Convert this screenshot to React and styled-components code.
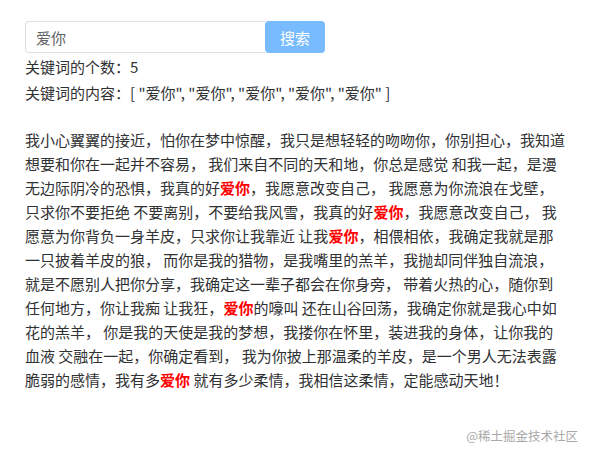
import { Fragment } from "react";
import styled, { createGlobalStyle } from "styled-components";

const GlobalStyle = createGlobalStyle`
  body {
    margin: 0;
    background: #fff;
    font-family: "Microsoft YaHei", "Noto Sans CJK SC", "Noto Sans", sans-serif;
    color: #303133;
  }
`;

const Page = styled.div`
  position: relative;
  width: 593px;
  height: 459px;
  padding: 21px 25px 0;
  box-sizing: border-box;
`;

const SearchBar = styled.div`
  display: flex;
  width: 300px;
  height: 32px;
`;

const SearchInput = styled.input`
  width: 240px;
  height: 32px;
  box-sizing: border-box;
  border: 1px solid #dcdfe6;
  border-right: none;
  border-radius: 4px 0 0 4px;
  padding: 0 10px;
  font: inherit;
  font-size: 15px;
  color: #606266;
  outline: none;
`;

const SearchButton = styled.button`
  width: 60px;
  height: 32px;
  border: none;
  border-radius: 4px;
  background: #79bbff;
  color: #fff;
  font: inherit;
  font-size: 15px;
  cursor: pointer;
`;

const Info = styled.div`
  font-size: 15px;
  line-height: 24px;
  margin-top: 2px;
`;

const Article = styled.p`
  width: 541px;
  margin: 23px 0 0;
  font-size: 15px;
  line-height: 24px;
  word-break: break-all;
`;

const Mark = styled.span`
  color: #f00;
  font-weight: bold;
`;

const Watermark = styled.div`
  position: absolute;
  right: 15px;
  bottom: 14px;
  font-size: 12.5px;
  color: #9a9a9a;
  opacity: 0.85;
`;

const keyword = "爱你";
const text =
  "我小心翼翼的接近，怕你在梦中惊醒，我只是想轻轻的吻吻你，你别担心，我知道想要和你在一起并不容易， 我们来自不同的天和地，你总是感觉 和我一起，是漫无边际阴冷的恐惧，我真的好爱你，我愿意改变自己， 我愿意为你流浪在戈壁，只求你不要拒绝 不要离别，不要给我风雪，我真的好爱你，我愿意改变自己， 我愿意为你背负一身羊皮，只求你让我靠近 让我爱你，相偎相依，我确定我就是那一只披着羊皮的狼， 而你是我的猎物，是我嘴里的羔羊，我抛却同伴独自流浪，就是不愿别人把你分享，我确定这一辈子都会在你身旁， 带着火热的心，随你到任何地方，你让我痴 让我狂，爱你的嚎叫 还在山谷回荡，我确定你就是我心中如花的羔羊， 你是我的天使是我的梦想，我搂你在怀里，装进我的身体，让你我的血液 交融在一起，你确定看到， 我为你披上那温柔的羊皮，是一个男人无法表露脆弱的感情，我有多爱你 就有多少柔情，我相信这柔情，定能感动天地！";

export default function App() {
  const parts = text.split(keyword);
  const found = parts.length - 1;
  return (
    <Page>
      <GlobalStyle />
      <SearchBar>
        <SearchInput defaultValue={keyword} />
        <SearchButton>搜索</SearchButton>
      </SearchBar>
      <Info>关键词的个数：{found}</Info>
      <Info>
        关键词的内容：[ {Array(found).fill(`"${keyword}"`).join(", ")} ]
      </Info>
      <Article>
        {parts.map((p, i) => (
          <Fragment key={i}>
            {p}
            {i < found && <Mark>{keyword}</Mark>}
          </Fragment>
        ))}
      </Article>
      <Watermark>@稀土掘金技术社区</Watermark>
    </Page>
  );
}
